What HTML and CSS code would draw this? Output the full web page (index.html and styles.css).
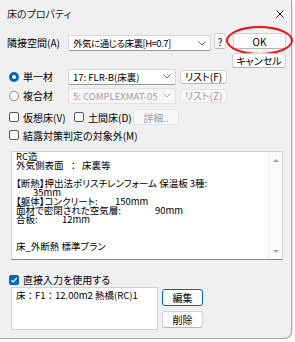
FILE: index.html
```html
<!DOCTYPE html>
<html>
<head lang="ja">
    <meta charset="UTF-8">
    <title>床のプロパティ</title>
    <link rel="stylesheet" href="styles.css">
</head>
<body>
<div id="dialog">
    <div id="titlebar">
        <span class="title">床のプロパティ</span>
        <svg class="close" width="8" height="8" viewBox="0 0 8 8"><path d="M.5 .5 7.5 7.5M7.5 .5 .5 7.5" stroke="#222" stroke-width="1" fill="none"/></svg>
    </div>

    <div class="row" id="row-adj">
        <span class="lbl">隣接空間(A)</span>
        <div class="combo combo-wide"><span class="tight">外気に通じる床裏[H=0.7]</span><svg class="chev" width="8" height="5" viewBox="0 0 8 5"><path d="M.5 .5 4 4 7.5 .5" stroke="#666" fill="none"/></svg></div>
        <span class="btn btn-q">?</span>
        <span class="btn btn-ok">OK<span class="ring"></span></span>
    </div>
    <div class="row" id="row-cancel">
        <span class="btn btn-cancel">キャンセル</span>
    </div>

    <div class="row" id="row-single">
        <span class="opt"><span class="radio on"></span>単一材</span>
        <div class="combo combo-mid"><span>17: FLR-B(床裏)</span><svg class="chev" width="8" height="5" viewBox="0 0 8 5"><path d="M.5 .5 4 4 7.5 .5" stroke="#666" fill="none"/></svg></div>
        <span class="btn btn-list">リスト(F)</span>
    </div>
    <div class="row" id="row-multi">
        <span class="opt"><span class="radio"></span>複合材</span>
        <div class="combo combo-mid off"><span>5: COMPLEXMAT-05</span><svg class="chev" width="8" height="5" viewBox="0 0 8 5"><path d="M.5 .5 4 4 7.5 .5" stroke="#b4b4b4" fill="none"/></svg></div>
        <span class="btn btn-list off">リスト(Z)</span>
    </div>

    <div class="row" id="row-flags">
        <span class="opt opt-v"><span class="check"></span>仮想床(V)</span>
        <span class="opt opt-d"><span class="check"></span>土間床(D)</span>
        <span class="btn btn-detail off">詳細..</span>
    </div>
    <div class="row" id="row-cond">
        <span class="opt"><span class="check"></span>結露対策判定の対象外(M)</span>
    </div>

    <div id="spec">
        <div class="spec-text">
            <p>RC造</p>
            <p>外気側表面<span class="sep">：</span>床裏等</p>
            <p>&nbsp;</p>
            <p>【断熱】押出法ポリスチレンフォーム 保温板 3種:</p>
            <p><span class="ind">35mm</span></p>
            <p><span class="k1">【躯体】コンクリート:</span>150mm</p>
            <p><span class="k2">面材で密閉された空気層:</span>90mm</p>
            <p><span class="k3">合板:</span>12mm</p>
            <p>&nbsp;</p>
            <p>&nbsp;</p>
            <p>床_外断熱 標準プラン</p>
        </div>
        <div class="vscroll">
            <span class="arr-up"></span>
            <span class="arr-down"></span>
        </div>
    </div>

    <div class="row" id="row-direct">
        <span class="opt"><span class="check on"><svg width="8" height="8" viewBox="0 0 8 8"><path d="M1.3 4.2 3.2 6 6.8 2" stroke="#fff" stroke-width="1.2" fill="none"/></svg></span>直接入力を使用する</span>
    </div>

    <div class="row" id="row-memo">
        <div class="memo">床：F1：12.00m2 熱橋(RC)1</div>
        <div class="btn-col">
            <span class="btn btn-edit">編集</span>
            <span class="btn btn-del">削除</span>
        </div>
    </div>
</div>
</body>
</html>
```

FILE: styles.css
```css
*{
    margin: 0;
    padding: 0;
    box-sizing: border-box;
}
body{
    background: #fff;
    font-family: "Noto Sans CJK JP", "Noto Sans", sans-serif;
    font-size: 10px;
    color: #000;
    font-feature-settings: "palt";
}
#dialog{
    width: 292px;
    height: 339px;
    background: #f0f0f0;
    border-right: 1px solid #a8a8a8;
    border-bottom: 1px solid #a8a8a8;
    border-bottom-right-radius: 8px;
    box-shadow: 1px 1px 2px rgba(0,0,0,.12);
}
#titlebar{
    height: 28px;
    display: flex;
    align-items: center;
    justify-content: space-between;
    padding: 0 7px 0 7px;
}
.title{
    line-height: 12px;
    color: #1a1a1a;
}

.row{
    display: flex;
    align-items: center;
    padding-left: 7px;
}
.lbl{
    width: 61px;
    line-height: 16px;
}

/* combo boxes */
.combo{
    height: 16px;
    display: flex;
    align-items: center;
    justify-content: space-between;
    padding: 0 4px 0 4px;
    font-size: 9.5px;
    background: #fff;
    border: 1px solid #d6d6d6;
    border-bottom-color: #9a9a9a;
    border-radius: 2px;
    white-space: nowrap;
}
.tight{
    letter-spacing: -0.5px;
}
.combo-wide{
    width: 143px;
}
.combo-mid{
    width: 108px;
}
.combo.off{
    background: #f7f7f7;
    color: #9f9f9f;
    border-color: #e2e2e2;
}

/* buttons */
.btn{
    display: flex;
    align-items: center;
    justify-content: center;
    background: #fdfdfd;
    border: 1px solid #d2d2d2;
    border-bottom-color: #b8b8b8;
    border-radius: 3px;
    white-space: nowrap;
    position: relative;
}
.btn.off{
    color: #a0a0a0;
    background: #f8f8f8;
    border-color: #e4e4e4;
}

#row-adj{
    margin-top: 5px;
    height: 18px;
    align-items: flex-start;
}
#row-adj .lbl,
#row-adj .combo{
    margin-top: 2px;
}
.btn-q{
    width: 12px;
    height: 16px;
    margin-left: 3px;
}
.btn-ok{
    width: 53px;
    height: 16px;
    margin-left: 7px;
}
.ring{
    position: absolute;
    left: -8px;
    top: -8px;
    width: 67px;
    height: 29px;
    border: 2px solid #e8101a;
    border-radius: 50%;
}

#row-cancel{
    margin-top: 2px;
    padding-left: 232px;
}
.btn-cancel{
    width: 54px;
    height: 15px;
}

/* radio + check */
.opt{
    display: flex;
    align-items: center;
    white-space: nowrap;
}
#row-single .opt,
#row-multi .opt{
    width: 61px;
}
.radio{
    width: 10px;
    height: 10px;
    margin: 0 4px 0 2px;
    border: 1px solid #8a8a8a;
    border-radius: 50%;
    background: #fff;
}
.radio.on{
    border: 3px solid #0067c0;
    background: #fff;
}
.check{
    width: 10px;
    height: 10px;
    margin: 0 4px 0 2px;
    border: 1px solid #5a5a5a;
    border-radius: 2px;
    background: #fdfdfd;
    display: flex;
    align-items: center;
    justify-content: center;
}
.check.on{
    background: #0067c0;
    border-color: #0067c0;
}

#row-single{
    margin-top: 0;
    height: 17px;
}
#row-multi{
    margin-top: 2px;
    height: 17px;
}
.btn-list{
    width: 47px;
    height: 14px;
    margin-left: 4px;
}
#row-flags{
    margin-top: 5px;
    height: 16px;
}
.opt-v{
    width: 65px;
}
.opt-d{
    width: 61px;
}
.btn-detail{
    width: 46px;
    height: 16px;
}
#row-cond{
    margin-top: 3px;
    height: 14px;
}

/* spec text box */
#spec{
    margin: 9px 0 0 11px;
    width: 272px;
    height: 109px;
    display: flex;
    background: #fff;
    border: 1px solid #d0d0d0;
    border-bottom-color: #858585;
}
.spec-text{
    flex: 1;
    padding: 0 0 0 4px;
    font-size: 9.5px;
    line-height: 9px;
    white-space: nowrap;
}
.sep{
    font-feature-settings: normal;
    margin: 0 4px 0 5px;
}
.ind{
    padding-left: 17px;
}
.k1,
.k2,
.k3{
    display: inline-block;
}
.k1{
    width: 99px;
}
.k2{
    width: 139px;
}
.k3{
    width: 46px;
}
.vscroll{
    width: 14px;
    display: flex;
    flex-direction: column;
    justify-content: space-between;
    align-items: center;
    padding: 7px 0 6px;
    background: #fafafa;
    border-left: 1px solid #ededed;
}
.arr-up,
.arr-down{
    width: 0;
    height: 0;
    border-left: 3px solid transparent;
    border-right: 3px solid transparent;
}
.arr-up{
    border-bottom: 3px solid #a3a3a3;
}
.arr-down{
    border-top: 3px solid #a3a3a3;
}

#row-direct{
    margin-top: 13px;
    height: 13px;
}

#row-memo{
    margin-top: 1px;
    padding-left: 11px;
    align-items: flex-start;
}
.memo{
    width: 147px;
    height: 43px;
    padding: 2px 0 0 4px;
    font-size: 9.5px;
    line-height: 11px;
    font-feature-settings: normal;
    background: #fff;
    border: 1px solid #d0d0d0;
    white-space: nowrap;
}
.btn-col{
    display: flex;
    flex-direction: column;
    gap: 5px;
    margin: 2px 0 0 4px;
}
.btn-edit,
.btn-del{
    width: 41px;
    height: 17px;
}
.btn-edit{
    border: 1px solid #0067c0;
}
```
